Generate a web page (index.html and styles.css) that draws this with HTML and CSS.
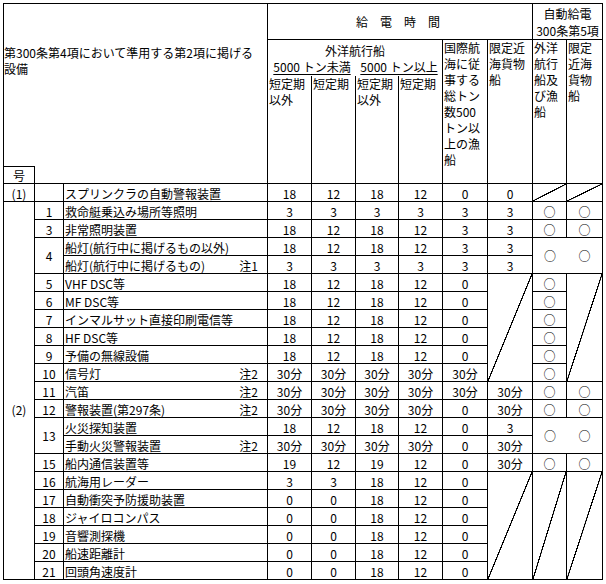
FILE: index.html
```html
<!DOCTYPE html>
<html lang="ja">
<head>
<meta charset="utf-8">
<title>給電時間</title>
<link rel="stylesheet" href="styles.css">
</head>
<body>
<div class="sheet">
  <div class="c hd-main cs3 rs4 nb">第300条第4項において準用する第2項に掲げる<br>設備</div>
  <div class="c hd-time cs6">給　電　時　間</div>
  <div class="c hd-auto cs2"><span>自動給電<br>300条第5項</span></div>

  <div class="c cs4 nb">外洋航行船</div>
  <div class="c top rs4">国際航<br>海に従<br>事する<br>総トン<br>数500<br>トン以<br>上の漁<br>船</div>
  <div class="c top rs4">限定近<br>海貨物<br>船</div>
  <div class="c top rs4">外洋<br>航行<br>船及<br>び漁<br>船</div>
  <div class="c top rs4">限定<br>近海<br>貨物<br>船</div>

  <div class="c ton cs2 nb nr"><span class="u">5000 トン未満</span></div>
  <div class="c ton cs2 nb"><span class="u">5000 トン以上</span></div>

  <div class="c top rs2">短定期<br>以外</div>
  <div class="c top rs2">短定期</div>
  <div class="c top rs2">短定期<br>以外</div>
  <div class="c top rs2">短定期</div>

  <div class="c go">号</div>
  <div class="c cs2"></div>

  <!-- (1) -->
  <div class="c">(1)</div><div class="c"></div><div class="c name">スプリンクラの自動警報装置</div>
  <div class="c">18</div><div class="c">12</div><div class="c">18</div><div class="c">12</div><div class="c">0</div><div class="c">0</div>
  <div class="c dg"></div><div class="c dg"></div>

  <!-- 1 -->
  <div class="c rs21 sec">(2)</div>
  <div class="c">1</div><div class="c name">救命艇乗込み場所等照明</div>
  <div class="c">3</div><div class="c">3</div><div class="c">3</div><div class="c">3</div><div class="c">3</div><div class="c">3</div>
  <div class="c">○</div><div class="c">○</div>

  <!-- 3 -->
  <div class="c">3</div><div class="c name">非常照明装置</div>
  <div class="c">18</div><div class="c">12</div><div class="c">18</div><div class="c">12</div><div class="c">3</div><div class="c">3</div>
  <div class="c">○</div><div class="c">○</div>

  <!-- 4 -->
  <div class="c rs2 mid">4</div><div class="c name">船灯(航行中に掲げるもの以外)</div>
  <div class="c">18</div><div class="c">12</div><div class="c">18</div><div class="c">12</div><div class="c">3</div><div class="c">3</div>
  <div class="c cs2 rs2 pair"><span>○</span><span>○</span></div>
  <div class="c name"><span>船灯(航行中に掲げるもの)</span><span>注1</span></div>
  <div class="c">3</div><div class="c">3</div><div class="c">3</div><div class="c">3</div><div class="c">3</div><div class="c">3</div>

  <!-- 5 -->
  <div class="c">5</div><div class="c name">VHF DSC等</div>
  <div class="c">18</div><div class="c">12</div><div class="c">18</div><div class="c">12</div><div class="c">0</div>
  <div class="c rs6 dg"></div><div class="c">○</div><div class="c rs6 dg"></div>

  <!-- 6 -->
  <div class="c">6</div><div class="c name">MF DSC等</div>
  <div class="c">18</div><div class="c">12</div><div class="c">18</div><div class="c">12</div><div class="c">0</div>
  <div class="c">○</div>

  <!-- 7 -->
  <div class="c">7</div><div class="c name">インマルサット直接印刷電信等</div>
  <div class="c">18</div><div class="c">12</div><div class="c">18</div><div class="c">12</div><div class="c">0</div>
  <div class="c">○</div>

  <!-- 8 -->
  <div class="c">8</div><div class="c name">HF DSC等</div>
  <div class="c">18</div><div class="c">12</div><div class="c">18</div><div class="c">12</div><div class="c">0</div>
  <div class="c">○</div>

  <!-- 9 -->
  <div class="c">9</div><div class="c name">予備の無線設備</div>
  <div class="c">18</div><div class="c">12</div><div class="c">18</div><div class="c">12</div><div class="c">0</div>
  <div class="c">○</div>

  <!-- 10 -->
  <div class="c">10</div><div class="c name"><span>信号灯</span><span>注2</span></div>
  <div class="c">30分</div><div class="c">30分</div><div class="c">30分</div><div class="c">30分</div><div class="c">30分</div>
  <div class="c">○</div>

  <!-- 11 -->
  <div class="c">11</div><div class="c name"><span>汽笛</span><span>注2</span></div>
  <div class="c">30分</div><div class="c">30分</div><div class="c">30分</div><div class="c">30分</div><div class="c">30分</div><div class="c">30分</div>
  <div class="c">○</div><div class="c">○</div>

  <!-- 12 -->
  <div class="c">12</div><div class="c name"><span>警報装置(第297条)</span><span>注2</span></div>
  <div class="c">30分</div><div class="c">30分</div><div class="c">30分</div><div class="c">30分</div><div class="c">0</div><div class="c">30分</div>
  <div class="c">○</div><div class="c">○</div>

  <!-- 13 -->
  <div class="c rs2 mid">13</div><div class="c name">火災探知装置</div>
  <div class="c">18</div><div class="c">12</div><div class="c">18</div><div class="c">12</div><div class="c">0</div><div class="c">3</div>
  <div class="c cs2 rs2 pair"><span>○</span><span>○</span></div>
  <div class="c name"><span>手動火災警報装置</span><span>注2</span></div>
  <div class="c">30分</div><div class="c">30分</div><div class="c">30分</div><div class="c">30分</div><div class="c">0</div><div class="c">30分</div>

  <!-- 15 -->
  <div class="c">15</div><div class="c name">船内通信装置等</div>
  <div class="c">19</div><div class="c">12</div><div class="c">19</div><div class="c">12</div><div class="c">0</div><div class="c">30分</div>
  <div class="c">○</div><div class="c">○</div>

  <!-- 16 -->
  <div class="c">16</div><div class="c name">航海用レーダー</div>
  <div class="c">3</div><div class="c">3</div><div class="c">18</div><div class="c">12</div><div class="c">0</div>
  <div class="c rs6 dg"></div><div class="c rs6 dg"></div><div class="c rs6 dg"></div>

  <!-- 17 -->
  <div class="c">17</div><div class="c name">自動衝突予防援助装置</div>
  <div class="c">0</div><div class="c">0</div><div class="c">18</div><div class="c">12</div><div class="c">0</div>

  <!-- 18 -->
  <div class="c">18</div><div class="c name">ジャイロコンパス</div>
  <div class="c">0</div><div class="c">0</div><div class="c">18</div><div class="c">12</div><div class="c">0</div>

  <!-- 19 -->
  <div class="c">19</div><div class="c name">音響測探機</div>
  <div class="c">0</div><div class="c">0</div><div class="c">18</div><div class="c">12</div><div class="c">0</div>

  <!-- 20 -->
  <div class="c">20</div><div class="c name">船速距離計</div>
  <div class="c">0</div><div class="c">0</div><div class="c">18</div><div class="c">12</div><div class="c">0</div>

  <!-- 21 -->
  <div class="c">21</div><div class="c name">回頭角速度計</div>
  <div class="c">0</div><div class="c">0</div><div class="c">18</div><div class="c">12</div><div class="c">0</div>
</div>
</body>
</html>
```

FILE: styles.css
```css
html, body {
  margin: 0;
  background: #fff;
}

body {
  font-family: "Noto Sans CJK JP", "Noto Sans CJK SC", sans-serif;
  font-size: 12px;
  color: #000;
}

.sheet {
  display: grid;
  grid-template-columns: 31px 29px 204px 44px 44px 43px 44px 45px 45px 34px 36px;
  grid-template-rows: 36px 18px 18px 90px 18px repeat(22, 18px);
  width: max-content;
  margin: 3px 0 0 3px;
  border-left: 1px solid #000;
  border-top: 1px solid #000;
}

.c {
  box-sizing: border-box;
  border-right: 1px solid #000;
  border-bottom: 1px solid #000;
  display: flex;
  align-items: flex-end;
  justify-content: center;
  line-height: 14px;
  white-space: nowrap;
  overflow: hidden;
  min-width: 0;
}

.nb { border-bottom: 0; }
.nr { border-right: 0; }

.cs2 { grid-column: span 2; }
.cs3 { grid-column: span 3; }
.cs4 { grid-column: span 4; }
.cs6 { grid-column: span 6; }
.rs2 { grid-row: span 2; }
.rs4 { grid-row: span 4; }
.rs6 { grid-row: span 6; }
.rs21 { grid-row: span 21; }

.hd-main {
  display: block;
  padding: 41px 0 0 0;
  line-height: 16px;
}

.hd-time {
  justify-content: flex-start;
  padding: 0 0 10px 88px;
}

.hd-auto {
  line-height: 17px;
}
.hd-auto span {
  text-align: center;
}

.top {
  display: block;
  padding: 0 0 0 1px;
  line-height: 16px;
}

.ton {
  padding-bottom: 2px;
}

.u {
  text-decoration: underline;
  text-underline-offset: 2px;
  text-decoration-thickness: 1px;
}

.go {
  border-top: 1px solid #000;
}

.name {
  justify-content: space-between;
  padding: 0 9px 0 1px;
}

.mid {
  align-items: center;
}

.sec {
  display: block;
  text-align: center;
  padding-top: 201px;
}

.pair {
  align-items: center;
  justify-content: flex-start;
}
.pair span {
  width: 34px;
  text-align: center;
}
.pair span + span {
  width: 35px;
}

.dg {
  background: linear-gradient(to top left,
    transparent calc(50% - 0.7px),
    #000 calc(50% - 0.5px),
    #000 calc(50% + 0.5px),
    transparent calc(50% + 0.7px));
}
```
